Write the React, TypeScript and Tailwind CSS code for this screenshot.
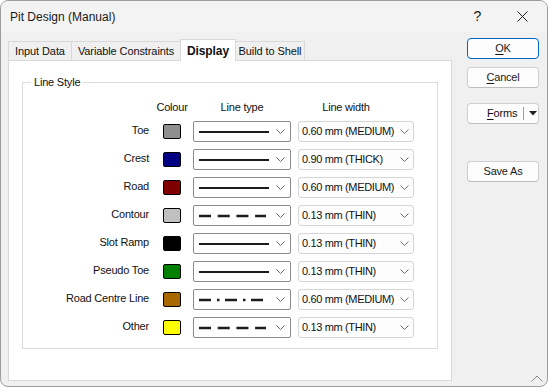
import { ReactNode } from 'react';

type LineKind = 'solid' | 'dash' | 'dashdot';

const rows: { label: string; colour: string; line: LineKind; width: string }[] = [
  { label: 'Toe', colour: '#8f8f8f', line: 'solid', width: '0.60 mm (MEDIUM)' },
  { label: 'Crest', colour: '#000080', line: 'solid', width: '0.90 mm (THICK)' },
  { label: 'Road', colour: '#800000', line: 'solid', width: '0.60 mm (MEDIUM)' },
  { label: 'Contour', colour: '#c0c0c0', line: 'dash', width: '0.13 mm (THIN)' },
  { label: 'Slot Ramp', colour: '#000000', line: 'solid', width: '0.13 mm (THIN)' },
  { label: 'Pseudo Toe', colour: '#008000', line: 'solid', width: '0.13 mm (THIN)' },
  { label: 'Road Centre Line', colour: '#a86800', line: 'dashdot', width: '0.60 mm (MEDIUM)' },
  { label: 'Other', colour: '#ffff00', line: 'dash', width: '0.13 mm (THIN)' },
];

const tabs = [
  { name: 'Input Data', w: 'w-[64px]' },
  { name: 'Variable Constraints', w: 'w-[110px]' },
  { name: 'Display', w: 'w-[56px]' },
  { name: 'Build to Shell', w: 'w-[70px]' },
];

const Chevron = () => (
  <svg width="9" height="5" viewBox="0 0 9 5" className="shrink-0">
    <path d="M0.5 0.5 L4.5 4.5 L8.5 0.5" fill="none" stroke="#6b6b6b" strokeWidth="1" />
  </svg>
);

// preview of the line style inside the combo
const LinePreview = ({ kind }: { kind: LineKind }) => {
  if (kind === 'solid') {
    return (
      <svg width="70" height="4">
        <line x1="0" y1="2" x2="70" y2="2" stroke="#1c1c1c" strokeWidth="2" />
      </svg>
    );
  }
  if (kind === 'dash') {
    return (
      <svg width="70" height="4">
        <line x1="0" y1="2" x2="67" y2="2" stroke="#1c1c1c" strokeWidth="2.5" strokeDasharray="12 6.7" />
      </svg>
    );
  }
  return (
    <svg width="70" height="4">
      <line x1="0" y1="2" x2="64" y2="2" stroke="#1c1c1c" strokeWidth="2.5" strokeDasharray="12 6 2.5 5.5" />
    </svg>
  );
};

const DialogButton = ({ children, primary }: { children: ReactNode; primary?: boolean }) => (
  <button
    className={`w-[72px] h-[21px] rounded-[4px] bg-[#fdfdfd] text-[#1a1a1a] flex items-center justify-center border ${
      primary ? 'border-[#0067c0]' : 'border-[#d0d0d0] border-b-[#bdbdbd]'
    }`}
  >
    {children}
  </button>
);

export default function App() {
  return (
    <div
      className="w-[548px] h-[387px] bg-[#f0f0f0] border border-[#9c9c9c] rounded-[8px] overflow-hidden relative text-[11px] tracking-[-0.2px] text-[#111]"
      style={{ fontFamily: '"Liberation Sans", Arial, sans-serif' }}
    >
      {/* Title bar */}
      <div className="h-[31px] flex items-center bg-[#f3f3f3]">
        <span className="ml-[9px] text-[12px] tracking-normal text-[#1a1a1a]">Pit Design (Manual)</span>
        <span className="ml-auto mr-[36px] text-[14px] text-[#1a1a1a]">?</span>
        <svg width="11" height="11" viewBox="0 0 11 11" className="mr-[19px]">
          <path d="M0.5 0.5 L10.5 10.5 M10.5 0.5 L0.5 10.5" stroke="#1a1a1a" strokeWidth="1" />
        </svg>
      </div>

      <div className="flex">
        {/* Tabs + panel */}
        <div className="ml-[7px] mt-[6px] w-[444px]">
          <div className="flex items-end h-[22px]">
            {tabs.map((t) =>
              t.name === 'Display' ? (
                <div
                  key={t.name}
                  className={`${t.w} h-[22px] bg-white border border-b-0 border-[#d9d9d9] font-bold text-[12px] tracking-[-0.1px] flex items-center justify-center relative z-10 -mb-px -mr-px`}
                >
                  {t.name}
                </div>
              ) : (
                <div
                  key={t.name}
                  className={`${t.w} h-[19px] bg-[#f0f0f0] border border-b-0 border-[#d9d9d9] -mr-px flex items-center justify-center tracking-[-0.1px] whitespace-nowrap`}
                >
                  {t.name}
                </div>
              )
            )}
          </div>
          <div className="h-[321px] bg-white border border-[#d9d9d9] pt-[21px] pl-[13px]">
            {/* Line Style group */}
            <div className="w-[416px] border border-[#dcdcdc] relative pt-[16px] pb-[7px]">
              <span className="absolute left-[8px] top-[-9px] bg-white px-[3px] leading-[16px]">Line Style</span>
              <div className="flex h-[16px] items-center">
                <div className="w-[126px]" />
                <div className="w-[18px] ml-[14px] flex justify-center whitespace-nowrap">Colour</div>
                <div className="w-[98px] ml-[12px] text-center">Line type</div>
                <div className="w-[116px] ml-[7px] text-center pr-[20px]">Line width</div>
              </div>
              <div className="mt-[2px]">
                {rows.map((r) => (
                  <div key={r.label} className="flex items-center h-[28px]">
                    <div className="w-[126px] text-right whitespace-nowrap -mt-[2px]">{r.label}</div>
                    <div
                      className="w-[18px] h-[15px] ml-[14px] rounded-[2px] border border-black"
                      style={{ backgroundColor: r.colour }}
                    />
                    <div className="w-[98px] h-[21px] ml-[12px] mt-px border border-[#8a8a8a] rounded-[2px] bg-white flex items-center pl-[5px] pr-[5px]">
                      <LinePreview kind={r.line} />
                      <div className="ml-auto">
                        <Chevron />
                      </div>
                    </div>
                    <div className="w-[116px] h-[21px] ml-[7px] mt-px border border-[#d6d6d6] rounded-[3px] bg-[#fdfdfd] flex items-center pl-[3px] pr-[4px]">
                      <span className="whitespace-nowrap tracking-[-0.35px]">{r.width}</span>
                      <div className="ml-auto">
                        <Chevron />
                      </div>
                    </div>
                  </div>
                ))}
              </div>
            </div>
          </div>
        </div>

        {/* Right-hand buttons */}
        <div className="ml-[15px] mt-[6px] flex flex-col">
          <DialogButton primary>
            <span className="underline underline-offset-2">O</span>K
          </DialogButton>
          <div className="mt-[8px]">
            <DialogButton>
              <span className="underline underline-offset-2">C</span>ancel
            </DialogButton>
          </div>
          <div className="mt-[15px] w-[72px] h-[21px] rounded-[4px] bg-[#fdfdfd] border border-[#d0d0d0] border-b-[#bdbdbd] flex items-center">
            <span className="ml-[19px]">
              <span className="underline underline-offset-2">F</span>orms
            </span>
            <div className="ml-[6px] w-px h-[13px] bg-[#9a9a9a]" />
            <svg width="8" height="5" viewBox="0 0 8 5" className="ml-[5px]">
              <path d="M0 0 L8 0 L4 4.5 Z" fill="#222" />
            </svg>
          </div>
          <div className="mt-[37px]">
            <DialogButton>Save As</DialogButton>
          </div>
        </div>
      </div>

      {/* size grip */}
      <svg width="12" height="7" viewBox="0 0 12 7" className="absolute right-[4px] bottom-[4px]">
        <path d="M0.5 6.5 L6 1 L11.5 6.5" fill="none" stroke="#8a8a8a" strokeWidth="1" />
      </svg>
    </div>
  );
}
